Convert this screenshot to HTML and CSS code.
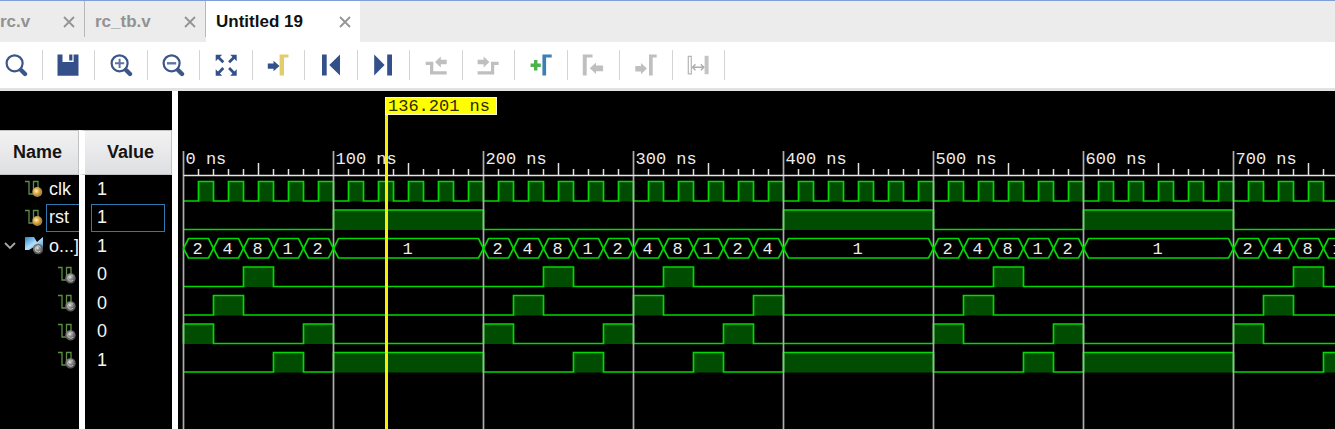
FILE: index.html
```html
<!DOCTYPE html>
<html lang="en">
<head>
<meta charset="utf-8">
<title>Untitled 19</title>
<link rel="stylesheet" href="styles.css">
</head>
<body>
<svg class="defs" width="0" height="0" aria-hidden="true">
  <defs>
    <radialGradient id="gold" cx="0.4" cy="0.4"><stop offset="0" stop-color="#fff6d4"/><stop offset="0.5" stop-color="#e8b04a"/><stop offset="1" stop-color="#a98442"/></radialGradient>
    <radialGradient id="steel" cx="0.45" cy="0.4"><stop offset="0" stop-color="#f0f0f0"/><stop offset="0.4" stop-color="#8f8f8f"/><stop offset="1" stop-color="#585858"/></radialGradient>
    <linearGradient id="sky" x1="0" y1="0" x2="1" y2="1"><stop offset="0" stop-color="#2484c6"/><stop offset="0.5" stop-color="#b5e0fa"/><stop offset="1" stop-color="#2a88c8"/></linearGradient>
    <symbol id="close" viewBox="0 0 12 12"><path d="M1 1L11 11M11 1L1 11" stroke="#949494" stroke-width="1.8" fill="none"/></symbol>
    <symbol id="signal" viewBox="0 0 18 18"><path d="M0 1.5H4V14H8.5V1.5H13V9" stroke="#5c8f48" stroke-width="1.3" fill="none"/></symbol>
  </defs>
</svg>

<nav class="tabs">
  <div class="tab tab-first"><a href="#rc">rc.v</a><button class="close" aria-label="Close rc.v"><svg><use href="#close"/></svg></button></div>
  <div class="tab tab-second"><a href="#rctb">rc_tb.v</a><button class="close" aria-label="Close rc_tb.v"><svg><use href="#close"/></svg></button></div>
  <div class="tab tab-active"><a href="#untitled">Untitled 19</a><button class="close" aria-label="Close Untitled 19"><svg><use href="#close"/></svg></button></div>
</nav>

<div class="toolbar" role="toolbar" aria-label="Waveform tools">
  <button aria-label="Search"><svg viewBox="0 0 24 24"><circle cx="10.6" cy="10.3" r="8" fill="none" stroke="#3c5688" stroke-width="2.2"/><path d="M17 17L21 21" stroke="#3c5688" stroke-width="4.4" stroke-linecap="round"/></svg></button>
  <button aria-label="Save"><svg viewBox="0 0 24 24"><path d="M1.5 1.4H6.5V9H17.6V1.4H22.5V22.7H1.5ZM13.2 1.4H16.4V7.4H13.2Z" fill="#34508a"/></svg></button>
  <button aria-label="Zoom in"><svg viewBox="0 0 24 24"><circle cx="10.6" cy="10.3" r="8" fill="none" stroke="#3c5688" stroke-width="2.2"/><path d="M17 17L21 21" stroke="#3c5688" stroke-width="4.4" stroke-linecap="round"/><path d="M6 10.3H15.2M10.6 5.7V14.9" stroke="#5f759f" stroke-width="2"/></svg></button>
  <button aria-label="Zoom out"><svg viewBox="0 0 24 24"><circle cx="10.6" cy="10.3" r="8" fill="none" stroke="#3c5688" stroke-width="2.2"/><path d="M17 17L21 21" stroke="#3c5688" stroke-width="4.4" stroke-linecap="round"/><path d="M6 10.3H15.2" stroke="#5f759f" stroke-width="2.4"/></svg></button>
  <button aria-label="Zoom fit"><svg viewBox="0 0 24 24"><path d="M1.7 1.7H8.2L1.7 8.2ZM22.7 1.7V8.2L16.2 1.7ZM1.7 22.7V16.2L8.2 22.7ZM22.7 22.7H16.2L22.7 16.2Z" fill="#34508a"/><path d="M4 4L9.3 9.3M20.4 4L15.1 9.3M4 20.4L9.3 15.1M20.4 20.4L15.1 15.1" stroke="#34508a" stroke-width="2.8"/></svg></button>
  <button aria-label="Go to cursor"><svg viewBox="0 0 24 24"><path d="M1.8 10.5H7.5V7.8L13.5 13L7.5 18.2V15.8H1.8Z" fill="#34508a"/><path d="M13.6 1.5H22.5V4.6H18V22.6H13.6Z" fill="#e3cc69"/></svg></button>
  <button aria-label="Go to start"><svg viewBox="0 0 24 24"><path d="M3 1.5H7.7V22.6H3ZM21 1.5V22.6L10.3 12Z" fill="#34508a"/></svg></button>
  <button aria-label="Go to end"><svg viewBox="0 0 24 24"><path d="M3.2 1.5L13.6 12L3.2 22.6ZM16.2 1.5H21V22.6H16.2Z" fill="#34508a"/></svg></button>
  <button aria-label="Previous transition"><svg viewBox="0 0 24 24"><path d="M1.7 8.7H9.3V18.2H22.7V21.6H6V12H1.7ZM11 9L16.8 3.6V6.8H22.7V11.2H16.8V14.4Z" fill="#bfbfbf"/></svg></button>
  <button aria-label="Next transition"><svg viewBox="0 0 24 24"><path d="M22.6 8.7H15V18.2H1.6V21.6H18.2V12H22.6ZM13.4 9L7.6 3.6V6.8H1.6V11.2H7.6V14.4Z" fill="#bfbfbf"/></svg></button>
  <button aria-label="Add marker"><svg viewBox="0 0 24 24"><path d="M5 7H8.4V10.6H11.8V14H8.4V17.6H5V14H1.6V10.6H5Z" fill="#4bb24c"/><path d="M13.4 1.5H22.7V4.6H17.1V22.6H13.4Z" fill="#3a80b2"/></svg></button>
  <button aria-label="Previous marker"><svg viewBox="0 0 24 24"><path d="M1.8 1.5H11.5V4.6H5.7V22.5H1.8ZM8.8 15.3L15 9.6V12.5H22.1V18.3H15V21Z" fill="#bfbfbf"/></svg></button>
  <button aria-label="Next marker"><svg viewBox="0 0 24 24"><path d="M15 1.5H22.7V4.6H18.7V22.5H15ZM12.9 15.6L7 10V12.9H1.3V18.5H7V21.2Z" fill="#bfbfbf"/></svg></button>
  <button aria-label="Swap cursors"><svg viewBox="0 0 24 24"><path d="M2.3 3.4H5.3V20.8H2.3Z" fill="none" stroke="#b5b5b5" stroke-width="1.2"/><path d="M18.6 2.8H22.6V21.2H18.6Z" fill="#c4c4c4"/><path d="M6.5 14.2H17.8M9.5 11.2L6.5 14.2L9.5 17.2M14.8 11.2L17.8 14.2L14.8 17.2" fill="none" stroke="#adadad" stroke-width="1.4"/></svg></button>
</div>

<main class="viewer">
  <section class="signals">
    <table>
      <thead><tr><th class="name">Name</th><th class="value">Value</th></tr></thead>
      <tbody>
        <tr><td class="name"><div class="cell"><svg class="sig" viewBox="0 0 18 18"><use href="#signal"/><circle cx="12.3" cy="12" r="5" fill="url(#gold)"/></svg><span>clk</span></div></td><td class="value"><div class="cell">1</div></td></tr>
        <tr class="selected"><td class="name"><div class="cell"><svg class="sig" viewBox="0 0 18 18"><use href="#signal"/><circle cx="12.3" cy="12" r="5" fill="url(#gold)"/></svg><span>rst</span></div></td><td class="value"><div class="cell">1</div></td></tr>
        <tr><td class="name"><div class="cell group"><button class="toggle" aria-label="Collapse"><svg viewBox="0 0 12 8"><path d="M1 1L6 6L11 1" fill="none" stroke="#a8a8a8" stroke-width="1.8"/></svg></button><svg class="sig" viewBox="0 0 18 18"><path d="M0 0H9L12 5L18 0V13H14L9 10L4 13H0Z" fill="url(#sky)"/><circle cx="13" cy="12" r="5.2" fill="url(#steel)"/><path d="M15.5 10A3 3 0 1 0 15.5 14" fill="none" stroke="#ccc"/></svg><span>o...]</span></div></td><td class="value"><div class="cell">1</div></td></tr>
        <tr><td class="name"><div class="cell child"><svg class="sig" viewBox="0 0 18 18"><use href="#signal"/><circle cx="12.5" cy="12.2" r="5.2" fill="url(#steel)"/><path d="M15 10.2A3 3 0 1 0 15 14.2" fill="none" stroke="#bbb"/></svg></div></td><td class="value"><div class="cell">0</div></td></tr>
        <tr><td class="name"><div class="cell child"><svg class="sig" viewBox="0 0 18 18"><use href="#signal"/><circle cx="12.5" cy="12.2" r="5.2" fill="url(#steel)"/><path d="M15 10.2A3 3 0 1 0 15 14.2" fill="none" stroke="#bbb"/></svg></div></td><td class="value"><div class="cell">0</div></td></tr>
        <tr><td class="name"><div class="cell child"><svg class="sig" viewBox="0 0 18 18"><use href="#signal"/><circle cx="12.5" cy="12.2" r="5.2" fill="url(#steel)"/><path d="M15 10.2A3 3 0 1 0 15 14.2" fill="none" stroke="#bbb"/></svg></div></td><td class="value"><div class="cell">0</div></td></tr>
        <tr><td class="name"><div class="cell child"><svg class="sig" viewBox="0 0 18 18"><use href="#signal"/><circle cx="12.5" cy="12.2" r="5.2" fill="url(#steel)"/><path d="M15 10.2A3 3 0 1 0 15 14.2" fill="none" stroke="#bbb"/></svg></div></td><td class="value"><div class="cell">1</div></td></tr>
        <tr class="rest"><td class="name"></td><td class="value"></td></tr>
      </tbody>
    </table>
  </section>
  <section class="waves" aria-label="Waveforms"><svg id="wave"></svg></section>
</main>
<script src="wave.js"></script>
</body>
</html>
```

FILE: styles.css
```css
* { box-sizing: border-box; }

body {
  margin: 0;
  height: 100vh;
  display: flex;
  flex-direction: column;
  overflow: hidden;
  background: #fff;
  font-family: "Liberation Sans", Arial, sans-serif;
  font-size: 18px;
}

button {
  margin: 0;
  padding: 0;
  border: 0;
  background: none;
}

svg { display: block; }
.defs { position: absolute; }

.tabs {
  display: flex;
  flex: none;
  height: 42px;
  background: #ececec;
  border-top: 1px solid #7f9fd6;
}

.tab {
  display: flex;
  align-items: center;
  justify-content: space-between;
  padding: 0 9px 0 10px;
  font-size: 17px;
  font-weight: bold;
}

.tab a {
  color: #929292;
  text-decoration: none;
}

.tab-first, .tab-second {
  height: 36px;
  padding-top: 5px;
  border-right: 1px solid #b8b8b8;
}

.tab-first { width: 85px; padding-left: 0; }
.tab-second { width: 121px; }

.tab-active {
  width: 154px;
  background: #fff;
}

.tab-active a { color: #111; }
.close svg { width: 12px; height: 12px; }

.toolbar {
  display: grid;
  grid-template-columns: repeat(14, 1fr);
  flex: none;
  align-items: center;
  width: 735px;
  height: 46px;
  margin-left: -10px;
}

.toolbar button {
  display: flex;
  align-items: center;
  justify-content: center;
  height: 30px;
  border-right: 1px solid #d4d4d4;
}

.toolbar svg { width: 24px; height: 24px; }

.viewer {
  display: flex;
  flex: 1;
  min-height: 0;
  border-top: 3px solid #e2e2e2;
}

.signals {
  flex: none;
  width: 178px;
  padding-top: 39px;
  background: #000;
  border-right: 6px solid #fff;
}

table {
  width: 100%;
  height: 100%;
  table-layout: fixed;
  border-spacing: 0;
  color: #f4f4f4;
}

th, td { padding: 0; }
th.name, td.name { width: 79px; }

th {
  height: 45px;
  background: linear-gradient(#f2f2f2, #dedfe2);
  border: 1px solid #c2c2c2;
  border-left: 0;
  color: #141414;
  text-align: left;
}

th.name { padding-left: 13px; }
th.value { padding-left: 22px; }
.value { border-left: 6px solid #fff; }

tbody tr { height: 28px; }
tbody tr:nth-child(even) { height: 29px; }
tbody tr.rest { height: auto; }

.cell {
  display: flex;
  align-items: center;
  height: 28px;
}

.name .cell { padding-left: 25px; }
.value .cell { margin: 0 7px 0 6px; padding-left: 6px; }
.name .group { padding-left: 4px; }
.name .child { padding-left: 58px; }

.name span {
  display: flex;
  flex: 1;
  align-items: center;
  height: 28px;
  margin-left: 3px;
  padding-left: 3px;
}

.selected span { border: 1px solid #3378ac; border-right: 0; padding-left: 2px; }
.selected .value .cell { border: 1px solid #3378ac; padding-left: 5px; }

.sig { flex: none; width: 18px; height: 18px; }
.toggle { width: 12px; margin-right: 9px; }
.toggle svg { width: 12px; height: 8px; }

.waves {
  flex: 1;
  min-width: 0;
  background: #000;
}

#wave { width: 100%; height: 100%; }

.wave-text {
  font-family: "Liberation Mono", "Courier New", monospace;
  font-size: 17px;
  fill: #ececec;
}

.flag-text { fill: #2c2c00; }
.centered { text-anchor: middle; }
.trace { fill: none; stroke: #00da00; stroke-width: 1.7; }
.high { fill: #004c00; }
.tick { stroke: #e4e4e4; stroke-width: 1.5; }
.grid-line { stroke: #acacac; stroke-width: 1.7; }
.flag { fill: #ff0; stroke: #f4f4d0; }
.cursor { stroke: #f7f000; stroke-width: 3; }
```

FILE: wave.js
```js
const svg = document.getElementById("wave");
const END = 780;
const x = ns => 5.5 + ns * 1.5;

function add(tag, attrs, text) {
  const el = document.createElementNS("http://www.w3.org/2000/svg", tag);
  for (const key in attrs) el.setAttribute(key, attrs[key]);
  if (text !== undefined) el.textContent = text;
  svg.appendChild(el);
}

// Bus transitions: [start ns, end ns, value]
const bus = [];
function run(start, values) {
  values.forEach((v, i) => bus.push([start + i * 20, start + i * 20 + 20, v]));
}
run(0, [2, 4, 8, 1, 2]);
bus.push([100, 200, 1]);
run(200, [2, 4, 8, 1, 2]);
run(300, [4, 8, 1, 2, 4]);
bus.push([400, 500, 1]);
run(500, [2, 4, 8, 1, 2]);
bus.push([600, 700, 1]);
run(700, [2, 4, 8, 1]);

function digital(top, pulses) {
  const low = top + 19.5;
  let d = `M${x(0)} ${low}`;
  for (const [a, b] of pulses) {
    add("rect", { class: "high", x: x(a), y: top, width: x(b) - x(a), height: 20 });
    d += `H${x(a)}V${top}H${x(b)}V${low}`;
  }
  add("path", { class: "trace", d: d + `H${x(END)}` });
}

const clock = [];
for (let t = 10; t < END; t += 20) clock.push([t, t + 10]);
digital(90.5, clock);
digital(119, [[100, 200], [400, 500], [600, 700]]);
[8, 4, 2, 1].forEach((bit, i) => {
  digital(176 + i * 28.5, bus.filter(s => s[2] === bit));
});

// Time ruler
for (let t = 0; t <= END; t += 10) {
  if (t % 100 === 0) {
    add("line", { class: "grid-line", x1: x(t), x2: x(t), y1: 60, y2: "100%" });
    add("text", { class: "wave-text", x: x(t) + 2, y: 73 }, t + " ns");
  } else {
    add("line", { class: "tick", x1: x(t), x2: x(t), y1: t % 50 === 0 ? 72 : 78, y2: 84 });
  }
}
add("line", { class: "tick", x1: x(0), x2: "100%", y1: 84.5, y2: 84.5 });

for (const [a, b, value] of bus) {
  const l = x(a), r = x(b);
  add("path", {
    class: "trace",
    d: `M${l} 157.5L${l + 5} 147.5H${r - 5}L${r} 157.5L${r - 5} 167H${l + 5}Z`
  });
  add("text", { class: "wave-text centered", x: (l + r) / 2 - 1, y: 163 }, value);
}

// Main cursor
add("line", { class: "cursor", x1: 208.5, x2: 208.5, y1: 8, y2: "100%" });
add("rect", { class: "flag", x: 207.5, y: 6.5, width: 111, height: 17 });
add("text", { class: "wave-text flag-text", x: 210, y: 20 }, "136.201 ns");
```
